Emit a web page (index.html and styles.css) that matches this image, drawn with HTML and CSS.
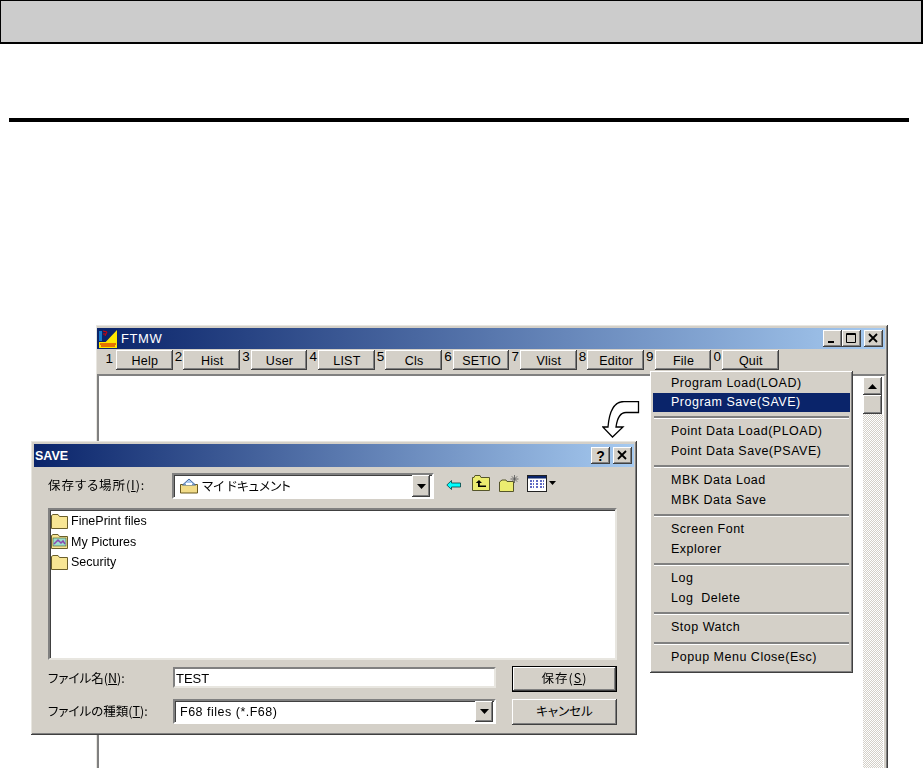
FILE: index.html
```html
<!DOCTYPE html>
<html lang="ja">
<head>
<meta charset="utf-8">
<title>FTMW SAVE</title>
<link rel="stylesheet" href="styles.css">
</head>
<body>
<div class="page-head"></div>
<div class="page-rule"></div>
<div class="desktop">
  <svg class="hint-arrow" width="38" height="38" viewBox="0 0 38 38"><path d="M36.500 .5H22Q8 .5 6 26H.8L10.500 36L21 26H14Q16 11.500 24 11.500H36.500Z" fill="#fff" stroke="#000" stroke-width="1.300"/></svg>

  <section class="win main-win">
    <header class="titlebar main-title">
      <svg class="logo" width="20" height="20" viewBox="0 0 20 20"><rect width="20" height="20" fill="#0a246a"/><path d="M2 19L19 1V19Z" fill="#ffe800"/><rect x="1" y="13" width="18" height="6" fill="#ffe800"/><path d="M2 15H18M3 17H17" stroke="#d00000" stroke-width="1.200"/><rect x="1" y="2" width="3" height="10" fill="#1a78c8"/><path d="M5 2L9 3L7 7M5 5H8" stroke="#e00000" fill="none"/></svg>
      <span class="main-name">FTMW</span>
      <div class="caption-btns">
        <button class="cap"><svg width="17" height="15" viewBox="0 0 17 15"><rect x="4" y="10" width="6" height="2" fill="#000"/></svg></button>
        <button class="cap"><svg width="17" height="15" viewBox="0 0 17 15"><path d="M3.500 2.500H12.500V11.500H3.500ZM3.500 3.500H12.500" fill="none" stroke="#000"/></svg></button>
        <button class="cap cap-gap"><svg width="17" height="15" viewBox="0 0 17 15"><path d="M4 3L12 11M12 3L4 11" stroke="#000" stroke-width="1.800"/></svg></button>
      </div>
    </header>
    <nav class="toolbar">
      <div class="slot"><span class="num num-first">1</span><button class="tool">Help</button></div>
      <div class="slot"><span class="num">2</span><button class="tool">Hist</button></div>
      <div class="slot"><span class="num">3</span><button class="tool">User</button></div>
      <div class="slot"><span class="num">4</span><button class="tool">LIST</button></div>
      <div class="slot"><span class="num">5</span><button class="tool">Cls</button></div>
      <div class="slot"><span class="num">6</span><button class="tool">SETIO</button></div>
      <div class="slot"><span class="num">7</span><button class="tool">Vlist</button></div>
      <div class="slot"><span class="num">8</span><button class="tool">Editor</button></div>
      <div class="slot"><span class="num">9</span><button class="tool">File</button></div>
      <div class="slot"><span class="num">0</span><button class="tool">Quit</button></div>
    </nav>
    <div class="client">
      <div class="scroll">
        <button class="scroll-btn"><svg width="9" height="5" viewBox="0 0 9 5"><path d="M4.500 0L9 5H0Z" fill="#000"/></svg></button>
        <div class="scroll-thumb"></div>
        <div class="scroll-track"></div>
      </div>
    </div>
  </section>

  <div class="menu">
    <div class="mi">Program Load(LOAD)</div>
    <div class="mi mi-active">Program Save(SAVE)</div>
    <div class="sep"></div>
    <div class="mi">Point Data Load(PLOAD)</div>
    <div class="mi">Point Data Save(PSAVE)</div>
    <div class="sep"></div>
    <div class="mi">MBK Data Load</div>
    <div class="mi">MBK Data Save</div>
    <div class="sep"></div>
    <div class="mi">Screen Font</div>
    <div class="mi">Explorer</div>
    <div class="sep"></div>
    <div class="mi">Log</div>
    <div class="mi">Log&nbsp;&nbsp;Delete</div>
    <div class="sep"></div>
    <div class="mi">Stop Watch</div>
    <div class="sep"></div>
    <div class="mi">Popup Menu Close(Esc)</div>
  </div>

  <section class="win dialog">
    <header class="titlebar dlg-title">
      <span class="dlg-name">SAVE</span>
      <div class="caption-btns">
        <button class="cap cap-help">?</button>
        <button class="cap cap-gap"><svg width="17" height="15" viewBox="0 0 17 15"><path d="M4 3L12 11M12 3L4 11" stroke="#000" stroke-width="1.800"/></svg></button>
      </div>
    </header>
    <div class="dlg-body">
      <div class="place-row">
        <label class="place-label jp">保存する場所(<u>I</u>):</label>
        <div class="combo place-combo">
          <svg class="item-icon" width="20" height="16" viewBox="0 0 20 16"><path d="M1.500 6.500H18.500V15H1.500Z" fill="#f2dc88" stroke="#6b5a1e"/><path d="M3.500 7L10 1L16.500 7Z" fill="#a8c8f0" stroke="#44689a"/><path d="M7 6H13" stroke="#fff" stroke-width="2"/></svg>
          <span class="place-value jp">マイ ドキュメント</span>
          <button class="drop"><svg width="9" height="5" viewBox="0 0 9 5"><path d="M0 0H9L4.500 5Z" fill="#000"/></svg></button>
        </div>
        <div class="tools">
          <svg class="t-back" width="15" height="10" viewBox="0 0 15 10"><path d="M5.500 .5L.8 5L5.500 9.500V7H14.500V3H5.500Z" fill="#00ffff" stroke="#004040" stroke-width=".8"/></svg>
          <svg class="t-up" width="18" height="16" viewBox="0 0 18 16"><path d="M.5 15.500V2.500H2L3 .5H8L9 2.500H17.500V15.500Z" fill="#ecec70" stroke="#55552a"/><path d="M7 5L3.800 8H6V12H14V10.500H7.800V8H10Z" fill="#000"/></svg>
          <svg class="t-new" width="20" height="18" viewBox="0 0 20 18"><path d="M.5 17.500V8L3 6H7L8 7.500H14.500V17.500Z" fill="#ecec70" stroke="#55552a"/><path d="M15.500 1V9M11.500 5H19.500M12.800 2.300L18.200 7.700M18.200 2.300L12.800 7.700" stroke="#555" stroke-width=".8"/></svg>
          <svg class="t-view" width="20" height="17" viewBox="0 0 20 17"><rect x=".5" y=".5" width="19" height="16" fill="#fff" stroke="#222"/><rect x="1" y="1" width="18" height="2.500" fill="#0a246a"/><path d="M3 6H7M9 6H11M13 6H17M3 9H7M9 9H11M13 9H17M3 12H7M9 12H11M13 12H17" stroke="#2a3ab0" stroke-width="1.500" stroke-dasharray="2 1"/></svg>
          <svg class="t-caret" width="7" height="4" viewBox="0 0 7 4"><path d="M0 0H7L3.500 4Z" fill="#000"/></svg>
        </div>
      </div>
      <div class="file-list">
        <div class="file-row">
          <svg class="file-icon" width="17" height="15" viewBox="0 0 17 15"><path d="M.5 14.500V1.500L2 .5H7L8.500 2.500H16.500V14.500Z" fill="#f8e694" stroke="#6b5f2a"/></svg>
          <span>FinePrint files</span>
        </div>
        <div class="file-row">
          <svg class="file-icon" width="17" height="15" viewBox="0 0 17 15"><path d="M.5 14.500V1.500L2 .5H7L8.500 2.500H16.500V14.500Z" fill="#f8e694" stroke="#6b5f2a"/><rect x="2" y="4" width="13" height="8" fill="#9adfd0" stroke="#5a6a3a" stroke-width=".7"/><path d="M3 10L7 6L10 9L12 7L14 10" fill="none" stroke="#8a48b0" stroke-width="1.500"/></svg>
          <span>My Pictures</span>
        </div>
        <div class="file-row">
          <svg class="file-icon" width="17" height="15" viewBox="0 0 17 15"><path d="M.5 14.500V1.500L2 .5H7L8.500 2.500H16.500V14.500Z" fill="#f8e694" stroke="#6b5f2a"/></svg>
          <span>Security</span>
        </div>
      </div>
      <div class="form-grid">
        <label class="jp form-label">ファイル名(<u>N</u>):</label>
        <div class="field name-field">TEST</div>
        <button class="dlg-btn dlg-default jp">保存(<u>S</u>)</button>
        <label class="jp form-label">ファイルの種類(<u>T</u>):</label>
        <div class="combo type-combo">
          <span class="type-value">F68 files (*.F68)</span>
          <button class="drop"><svg width="9" height="5" viewBox="0 0 9 5"><path d="M0 0H9L4.500 5Z" fill="#000"/></svg></button>
        </div>
        <button class="dlg-btn jp">キャンセル</button>
      </div>
    </div>
  </section>
</div>
</body>
</html>
```
FILE: styles.css
```css
* { box-sizing: border-box; }
html, body { margin: 0; height: 100%; }
body {
  width: 923px;
  height: 768px;
  overflow: hidden;
  background: #fff;
  color: #000;
  font-family: "Liberation Sans", "Noto Sans CJK JP", sans-serif;
  font-size: 12.500px;
}
button { font: inherit; color: inherit; padding: 0; margin: 0; }
u { text-underline-offset: 1px; }
.jp { font-feature-settings: "palt"; font-family: "Noto Sans CJK JP", sans-serif; font-size: 12.500px; }

.page-head {
  height: 44px;
  background: #ccc;
  border: 1px solid #000;
  border-right-width: 2px;
  border-bottom-width: 2px;
}
.page-rule {
  height: 4px;
  margin: 74px 14px 0 9px;
  background: #000;
}
.desktop {
  position: relative;
  height: 646px;
  overflow: hidden;
  filter: blur(.35px);
}
.hint-arrow { position: absolute; left: 602px; top: 279px; z-index: 1; }

.win {
  position: absolute;
  display: flex;
  flex-direction: column;
  background: #d4d0c8;
  box-shadow: inset -1px -1px #404040, inset 1px 1px #e8e6e0, inset -2px -2px #808080;
}
.main-win { left: 96px; top: 203px; width: 792px; height: 470px; padding: 3px 2px 0 1px; }
.dialog { left: 31px; top: 319px; width: 606px; height: 294px; padding: 3px; z-index: 3; }

.titlebar { display: flex; align-items: center; flex: none; color: #fff; background: linear-gradient(90deg, #0a246a, #a6caf0); }
.main-title { height: 21px; margin-right: 1px; }
.logo { margin-left: 1px; flex: none; }
.main-name { margin-left: 3px; font-size: 13px; letter-spacing: .6px; }
.dlg-title { height: 23px; }
.dlg-name { margin-left: 1px; font-weight: 700; font-size: 12.500px; }
.caption-btns { margin-left: auto; display: flex; padding-right: 2px; }
.cap {
  width: 19px; height: 17px; display: flex; align-items: center; justify-content: center;
  border: 0; background: #d4d0c8; color: #000; margin-left: 0;
  box-shadow: inset -1px -1px #404040, inset 1px 1px #fff, inset -2px -2px #808080;
}
.cap-gap { margin-left: 3px; }
.cap-help { font-weight: 700; font-size: 14px; }

.toolbar { display: flex; height: 25px; padding: 1px 0 0 8.500px; flex: none; }
.slot { width: 67.330px; display: flex; flex: none; }
.num { width: 10.500px; flex: none; text-align: right; padding-right: 1px; font-size: 13.500px; line-height: 13px; }
.num-first { padding: 2px 3px 0 0; }
.tool {
  width: 57px; height: 20px; border: 0; background: #d4d0c8; padding: 1px 0 0 1px;
  box-shadow: inset -1px -1px #404040, inset 1px 1px #fff, inset -2px -2px #808080;
  letter-spacing: .25px;
}
.client {
  flex: 1; display: flex; justify-content: flex-end; background: #fff;
  border-style: solid; border-color: #808080 #d4d0c8 #d4d0c8 #808080; border-width: 2px 2px 0 2px;
  padding-top: 1px;
}
.scroll { width: 20px; margin-right: 1px; display: flex; flex-direction: column; }
.scroll-btn, .scroll-thumb {
  width: 19px; flex: none; border: 0; background: #d4d0c8; display: flex; align-items: center; justify-content: center;
  box-shadow: inset -1px -1px #404040, inset 1px 1px #fff, inset -2px -2px #808080;
}
.scroll-btn { height: 18px; }
.scroll-thumb { height: 19px; }
.scroll-track { flex: 1; background: repeating-conic-gradient(#fff 0 25%, #d4d0c8 0 50%) 0 0 / 2px 2px; margin-top: 0; }

.menu {
  position: absolute; left: 650px; top: 249px; width: 203px; height: 302px; padding: 2px 3px; z-index: 2;
  background: #d4d0c8;
  box-shadow: inset -1px -1px #404040, inset 1px 1px #fff, inset -2px -2px #808080, inset 2px 2px #d4d0c8;
}
.mi { height: 19.600px; line-height: 19px; padding: .5px 0 0 18px; white-space: nowrap; letter-spacing: .5px; }
.mi-active { background: #0a246a; color: #fff; }
.sep { height: 9.800px; margin: 0 1px; padding-top: 4px; }
.sep::before { content: ""; display: block; height: 2px; background: #808080; border-bottom: 1px solid #fff; }

.dlg-body { display: flex; flex-direction: column; padding: 6px 17px 0 14px; }
.place-row { display: flex; height: 26px; align-items: center; }
.place-label { width: 124px; flex: none; letter-spacing: .9px; margin-top: -3px; }
.combo {
  display: flex; align-items: center; background: #fff;
  border-style: solid; border-width: 2px; border-color: #808080 #fff #fff #808080;
  box-shadow: inset 1px 1px #404040;
}
.place-combo { width: 262px; height: 26px; padding: 0 2px 0 5px; flex: none; }
.item-icon { flex: none; }
.place-value { margin-left: 3px; margin-top: -2px; }
.drop {
  margin-left: auto; width: 18px; height: 100%; border: 0; background: #d4d0c8; display: flex; align-items: center; justify-content: center; flex: none;
  box-shadow: inset -1px -1px #404040, inset 1px 1px #fff, inset -2px -2px #808080;
}
.tools { display: flex; align-items: center; margin-left: 12px; }
.t-back { margin-right: 11px; margin-top: -2px; }
.t-up { margin-right: 9px; margin-top: -6px; }
.t-new { margin-right: 8px; margin-top: -6px; }
.t-view { margin-right: 2px; margin-top: -6px; }
.t-caret { margin-top: -6px; }

.file-list {
  margin-top: 9px; height: 152px; padding: 1px 0 0 1px; background: #fff;
  border-style: solid; border-width: 2px; border-color: #808080 #e8e6e0 #e8e6e0 #808080;
  box-shadow: inset 1px 1px #404040;
}
.file-row { display: flex; align-items: center; gap: 3px; height: 20.500px; }
.file-icon { flex: none; }

.form-grid {
  display: grid; margin-top: 6px;
  grid-template-columns: 125px 323px 121px;
  grid-template-rows: 26px 26px;
  row-gap: 7px;
  align-items: center;
}
.form-label { margin-top: -3px; white-space: nowrap; }
.field {
  height: 21px; padding: 2px 0 0 1px; background: #fff; line-height: 15px; font-size: 13px;
  border-style: solid; border-width: 2px; border-color: #808080 #e8e6e0 #e8e6e0 #808080;
}
.name-field { align-self: start; margin-top: 1px; }
.type-combo { height: 25px; padding: 0 1px 0 3px; align-self: start; }
.type-value { letter-spacing: .5px; margin-left: 2px; }
.dlg-btn {
  width: 105px; height: 26px; border: 0; background: #d4d0c8; justify-self: end; padding-bottom: 3px;
  box-shadow: inset -1px -1px #404040, inset 1px 1px #fff, inset -2px -2px #808080;
}
.dlg-default {
  border: 1px solid #000;
  letter-spacing: 1px;
  box-shadow: inset -1px -1px #404040, inset 1px 1px #fff, inset -2px -2px #808080;
}
```
